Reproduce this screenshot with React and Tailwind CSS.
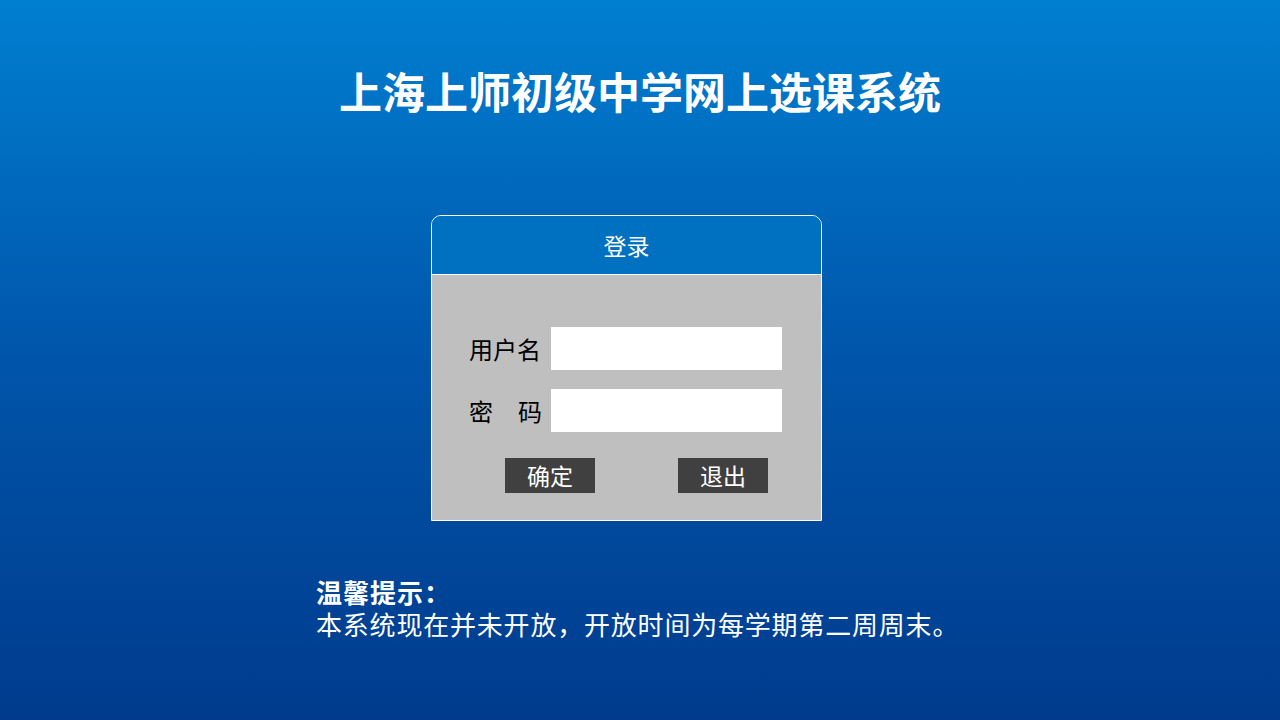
export default function App() {
  const cjk = { fontFamily: '"Noto Sans CJK SC", "Noto Sans", sans-serif' };
  return (
    <div
      className="w-full h-[720px] flex flex-col items-center bg-gradient-to-b from-[#007fd1] via-[#0055aa] to-[#003b8d] text-white overflow-hidden"
      style={cjk}
    >
      <h1 className="mt-[62px] h-[56px] text-[43px] leading-[56px] font-bold">
        上海上师初级中学网上选课系统
      </h1>

      <div className="self-start ml-[431px] mt-[97px] w-[391px] border border-white rounded-t-[10px] overflow-hidden">
        <div className="h-[59px] bg-[#0070c0] border-b border-white flex items-center justify-center text-[23px] leading-none">
          登录
        </div>
        <div className="bg-[#bfbfbf] pt-[52px] pb-[27px] flex flex-col text-black">
          <div className="flex items-center pl-[37px]">
            <div className="w-[82px] text-[24px] leading-none">用户名</div>
            <div className="w-[231px] h-[43px] bg-white"></div>
          </div>
          <div className="flex items-center pl-[37px] mt-[19px]">
            <div className="w-[82px] text-[24px] leading-none">
              <div className="w-[73px] flex justify-between">
                <span>密</span>
                <span>码</span>
              </div>
            </div>
            <div className="w-[231px] h-[43px] bg-white"></div>
          </div>
          <div className="flex pl-[73px] gap-[83px] mt-[26px]">
            <div className="w-[90px] h-[35px] bg-[#404040] text-white text-[23px] leading-none flex items-center justify-center">
              确定
            </div>
            <div className="w-[90px] h-[35px] bg-[#404040] text-white text-[23px] leading-none flex items-center justify-center">
              退出
            </div>
          </div>
        </div>
      </div>

      <div className="w-full pl-[316px] mt-[55px]">
        <div className="text-[26px] leading-[32px] font-bold tracking-[1px]">温馨提示：</div>
        <div className="text-[26px] leading-[32px] tracking-[0.8px]">本系统现在并未开放，开放时间为每学期第二周周末。</div>
      </div>
    </div>
  );
}
